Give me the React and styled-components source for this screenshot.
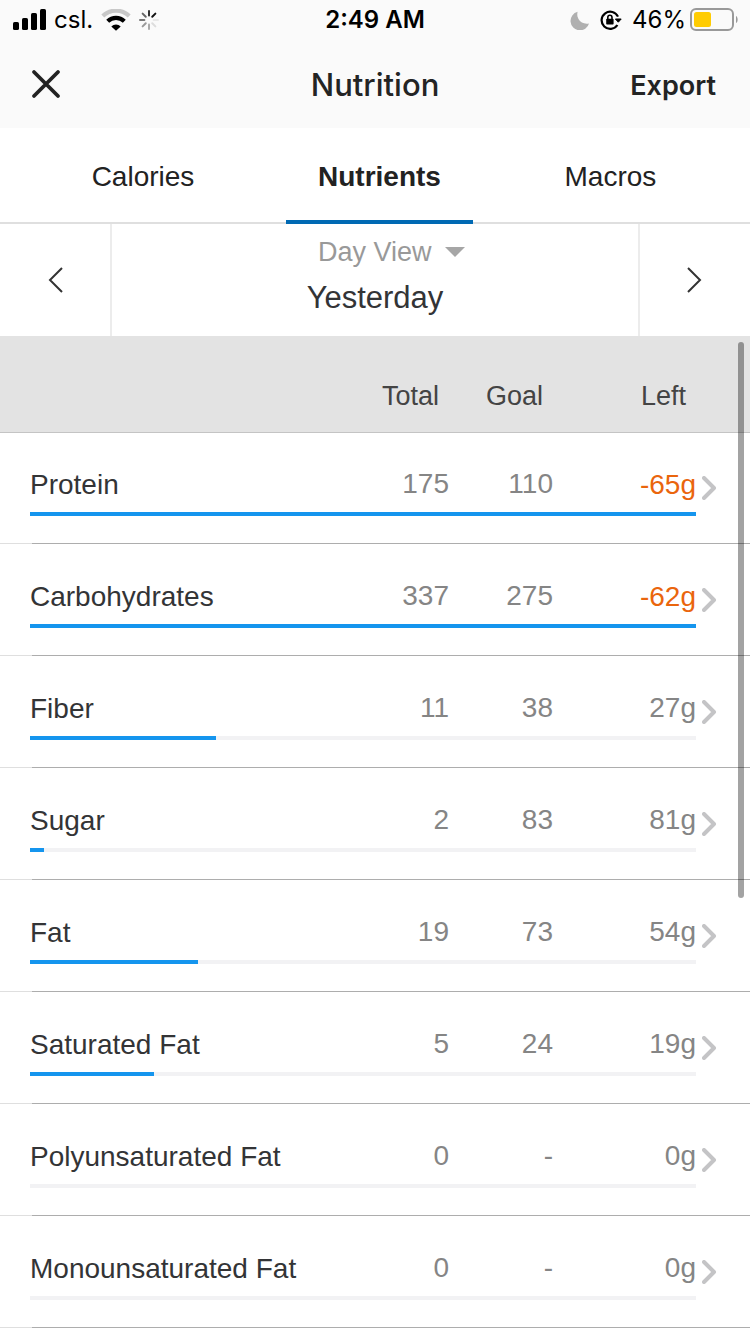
import React, { useState } from 'react'
import styled, { createGlobalStyle } from 'styled-components'

const GlobalStyle = createGlobalStyle`
  :root {
    --text-color: #333436;
    --bar-color: #fafafa;
    --line-color: #dfdfdf;
    --accent-color: #0069b3;
    --progress-color: #1595ee;
    --over-color: #ea650d;
    --body-font: "Liberation Sans", Arial, sans-serif;
    --system-font: Inter, "Liberation Sans", sans-serif;
  }

  * {
    box-sizing: border-box;
  }

  body {
    margin: 0;
    background: #fff;
    color: var(--text-color);
    font-family: var(--body-font);
    font-size: 28px;
    line-height: 32px;
  }

  button,
  select {
    margin: 0;
    padding: 0;
    border: none;
    background: transparent;
    color: inherit;
    font: inherit;
    cursor: pointer;
  }

  svg {
    display: block;
    flex-shrink: 0;
  }
`

const Page = styled.div`
  display: flex;
  flex-direction: column;
  min-height: 100vh;
`

const TopBar = styled.header`
  background: var(--bar-color);
  font-family: var(--system-font);
`

const StatusBar = styled.div`
  display: grid;
  grid-template-columns: 1fr auto 1fr;
  align-items: center;
  height: 40px;
  padding: 0 12px;
  color: #000;
  font-size: 24px;
  line-height: 40px;
`

const StatusGroup = styled.div`
  display: flex;
  align-items: center;
  justify-content: ${props => props.$end ? 'flex-end' : 'flex-start'};
  gap: ${props => props.$end ? '10px' : '8px'};
`

const Clock = styled.time`
  font-weight: 600;
`

const Battery = styled.span`
  display: flex;
  align-items: center;
  gap: 4px;
`

const TitleBar = styled.div`
  display: grid;
  grid-template-columns: 1fr auto 1fr;
  align-items: center;
  height: 88px;
  padding: 0 30px;
  color: #232424;
`

const Title = styled.h1`
  margin: 0;
  padding-top: 2px;
  font-size: 31px;
  font-weight: 500;
`

const CloseBtn = styled.button`
  justify-self: start;
`

const ExportBtn = styled.button`
  justify-self: end;
  padding: 4px 4px 0 0;
  font-size: 27px;
  font-weight: 600;
`

const Tabs = styled.nav`
  display: flex;
  justify-content: space-evenly;
  height: 96px;
  padding-right: 2px;
  box-shadow: inset 0 -2px var(--line-color);
`

const Tab = styled.button`
  padding: 2px 32px 0;
  color: #222;
  font-weight: ${props => props.$active ? 'bold' : 'normal'};
  border-top: 4px solid transparent;
  border-bottom: 4px solid ${props => props.$active ? 'var(--accent-color)' : 'transparent'};
`

const DateBar = styled.section`
  display: grid;
  grid-template-columns: 112px 1fr 112px;
  height: 112px;
`

const StepBtn = styled.button`
  display: flex;
  align-items: center;
  justify-content: center;
  border-right: ${props => props.$prev && '2px solid #ececec'};
  border-left: ${props => props.$next && '2px solid #ececec'};
`

const DateInfo = styled.div`
  display: flex;
  flex-direction: column;
  align-items: center;
  padding-top: 12px;
  gap: 12px;
`

const ViewPicker = styled.label`
  position: relative;
  color: #999;
  font-size: 27px;

  select {
    display: block;
    appearance: none;
  }

  svg {
    position: absolute;
    left: 100%;
    top: 11px;
    margin-left: 13px;
    pointer-events: none;
  }
`

const DateName = styled.div`
  font-size: 31px;
  line-height: 36px;
`

const ListArea = styled.main`
  position: relative;
  flex: 1;
`

const ScrollThumb = styled.div`
  position: absolute;
  top: 6px;
  right: 6px;
  width: 6px;
  height: 556px;
  border-radius: 3px;
  background: rgba(0, 0, 0, .36);
`

const Table = styled.table`
  display: block;

  thead,
  tbody {
    display: block;
  }

  th,
  td {
    padding: 0;
    font-weight: normal;
  }
`

const GridRow = styled.tr`
  display: grid;
  grid-template-columns: 1fr 104px 104px 143px 54px;
  padding-left: 30px;
`

const HeadRow = styled(GridRow)`
  height: 96px;
  padding-top: 44px;
  background: #e3e3e3;
  box-shadow: 0 1px #c4c4c4;
`

const HeadCell = styled.th`
  && {
    padding-right: 10px;
  }
  text-align: right;
  color: #444;
  font-size: 27px;
`

const Row = styled(GridRow)`
  height: 112px;
  padding-top: 36px;
  align-content: start;
  row-gap: 10px;
  background: linear-gradient(to right, #dfdfdf 32px, #adadad 32px) bottom / 100% 1px no-repeat;
`

const Name = styled.th`
  text-align: left;
  line-height: 34px;
`

const Amount = styled.td`
  text-align: right;
  color: ${props => props.$over ? 'var(--over-color)' : '#858585'};
  line-height: ${props => props.$over ? '34px' : '32px'};
`

const More = styled.td`
  align-self: start;

  a {
    display: block;
    width: 15px;
    margin: 8px 0 0 6px;
  }
`

const ProgressCell = styled.td`
  grid-column: 1 / 5;
`

const Track = styled.div`
  height: 4px;
  background: #f2f2f4;
`

const Fill = styled.div`
  height: 100%;
  background: var(--progress-color);
`

const tabs = ['Calories', 'Nutrients', 'Macros']

const nutrients = [
  { name: 'Protein', total: 175, goal: 110, left: -65, progress: 100 },
  { name: 'Carbohydrates', total: 337, goal: 275, left: -62, progress: 100 },
  { name: 'Fiber', total: 11, goal: 38, left: 27, progress: 28 },
  { name: 'Sugar', total: 2, goal: 83, left: 81, progress: 2.1 },
  { name: 'Fat', total: 19, goal: 73, left: 54, progress: 25.2 },
  { name: 'Saturated Fat', total: 5, goal: 24, left: 19, progress: 18.6 },
  { name: 'Polyunsaturated Fat', total: 0, goal: '-', left: 0, progress: 0 },
  { name: 'Monounsaturated Fat', total: 0, goal: '-', left: 0, progress: 0 },
]

// Spokes run clockwise from the top
const spokes = ['#333', '#111', '#e8e8e8', '#ddd', '#aaa', '#999', '#777', '#666']

const SignalIcon = () => (
  <svg width='34' height='22' viewBox='0 0 34 22'>
    <rect x='1' y='13' width='6' height='8' rx='1.6' />
    <rect x='10' y='9' width='6' height='12' rx='1.6' />
    <rect x='19' y='4' width='6' height='17' rx='1.6' />
    <rect x='28' y='0' width='6' height='21' rx='1.6' />
  </svg>
)

const WifiIcon = () => (
  <svg width='30' height='22' viewBox='0 0 30 22' fill='none'>
    <path d='M1.8 7a19 19 0 0 1 26.4 0' stroke='#c8c8c8' strokeWidth='4.2' />
    <path d='M6.7 12.3a12 12 0 0 1 16.6 0' stroke='#000' strokeWidth='4.2' />
    <path d='M15 21.8l-4.7-4.4a6.6 6.6 0 0 1 9.4 0z' fill='#000' />
  </svg>
)

const SpinnerIcon = () => (
  <svg width='20' height='20' viewBox='0 0 20 20' strokeWidth='2' strokeLinecap='round'>
    {spokes.map((color, i) => (
      <line key={i} x1='10' y1='1' x2='10' y2='5.4' stroke={color} transform={`rotate(${i * 45} 10 10)`} />
    ))}
  </svg>
)

const MoonIcon = () => (
  <svg width='20' height='20' viewBox='0 0 20 20' fill='#b0b0b0'>
    <path d='M7.6 1.8A9.4 9.4 0 1 0 19 13.4 9.4 9.4 0 0 1 7.6 1.8z' />
  </svg>
)

const LockIcon = () => (
  <svg width='22' height='20' viewBox='0 0 22 20' fill='none' stroke='#000'>
    <path d='M18 6.6A8.6 8.6 0 1 0 17.4 15' strokeWidth='2.2' />
    <path d='M15.4 9h5.8l-2.9 3.2z' fill='#000' strokeWidth='1' strokeLinejoin='round' />
    <rect x='6.2' y='8.8' width='7.4' height='5.8' rx='.8' fill='#000' stroke='none' />
    <path d='M7.8 9V7.4a2.1 2.1 0 0 1 4.2 0V9' strokeWidth='1.6' />
  </svg>
)

const BatteryIcon = () => (
  <svg width='48' height='24' viewBox='0 0 48 24'>
    <rect x='1' y='1' width='42' height='21' rx='5' fill='none' stroke='#999' strokeWidth='2' />
    <rect x='4' y='4' width='17' height='15' rx='2.5' fill='#ffcc02' />
    <path d='M46 8c2.2 1 2.2 6 0 7z' fill='#999' />
  </svg>
)

const CloseIcon = () => (
  <svg width='32' height='32' viewBox='0 0 32 32' stroke='#222' strokeWidth='3.8' strokeLinecap='round'>
    <path d='M4 4l24 24M28 4L4 28' />
  </svg>
)

const Chevron = ({ flip }) => (
  <svg width='16' height='26' viewBox='0 0 16 26' fill='none' stroke='#333' strokeWidth='2'>
    <path d={flip ? 'M15 1L3 13l12 12' : 'M1 1l12 12L1 25'} />
  </svg>
)

const RowArrow = () => (
  <svg width='15' height='24' viewBox='0 0 15 24' fill='none' stroke='#c4c4c6' strokeWidth='4' strokeLinecap='round' strokeLinejoin='round'>
    <path d='M2 2l10 10L2 22' />
  </svg>
)

export default function App() {
  const [active, setActive] = useState('Nutrients')

  return (
    <>
      <GlobalStyle />
      <Page>
        <TopBar>
          <StatusBar>
            <StatusGroup>
              <SignalIcon />
              <span>csl.</span>
              <WifiIcon />
              <SpinnerIcon />
            </StatusGroup>
            <Clock>2:49 AM</Clock>
            <StatusGroup $end>
              <MoonIcon />
              <LockIcon />
              <Battery>46%<BatteryIcon /></Battery>
            </StatusGroup>
          </StatusBar>
          <TitleBar>
            <CloseBtn aria-label='Close'><CloseIcon /></CloseBtn>
            <Title>Nutrition</Title>
            <ExportBtn>Export</ExportBtn>
          </TitleBar>
        </TopBar>
        <Tabs>
          {tabs.map(tab => (
            <Tab key={tab} $active={tab === active} onClick={() => setActive(tab)}>
              {tab}
            </Tab>
          ))}
        </Tabs>
        <DateBar>
          <StepBtn $prev aria-label='Previous day'><Chevron flip /></StepBtn>
          <DateInfo>
            <ViewPicker>
              <select aria-label='View'>
                <option>Day View</option>
              </select>
              <svg width='20' height='10' viewBox='0 0 20 10' fill='#a6a6a6'>
                <path d='M0 0h20L10 10z' />
              </svg>
            </ViewPicker>
            <DateName>Yesterday</DateName>
          </DateInfo>
          <StepBtn $next aria-label='Next day'><Chevron /></StepBtn>
        </DateBar>
        <ListArea>
          <Table>
            <thead>
              <HeadRow>
                <td />
                <HeadCell scope='col'>Total</HeadCell>
                <HeadCell scope='col'>Goal</HeadCell>
                <HeadCell scope='col'>Left</HeadCell>
              </HeadRow>
            </thead>
            <tbody>
              {nutrients.map(({ name, total, goal, left, progress }) => (
                <Row key={name}>
                  <Name scope='row'>{name}</Name>
                  <Amount>{total}</Amount>
                  <Amount>{goal}</Amount>
                  <Amount $over={left < 0}>{left}g</Amount>
                  <More>
                    <a href='#details' aria-label={name}><RowArrow /></a>
                  </More>
                  <ProgressCell>
                    <Track>
                      <Fill style={{ width: `${progress}%` }} />
                    </Track>
                  </ProgressCell>
                </Row>
              ))}
            </tbody>
          </Table>
          <ScrollThumb />
        </ListArea>
      </Page>
    </>
  )
}
